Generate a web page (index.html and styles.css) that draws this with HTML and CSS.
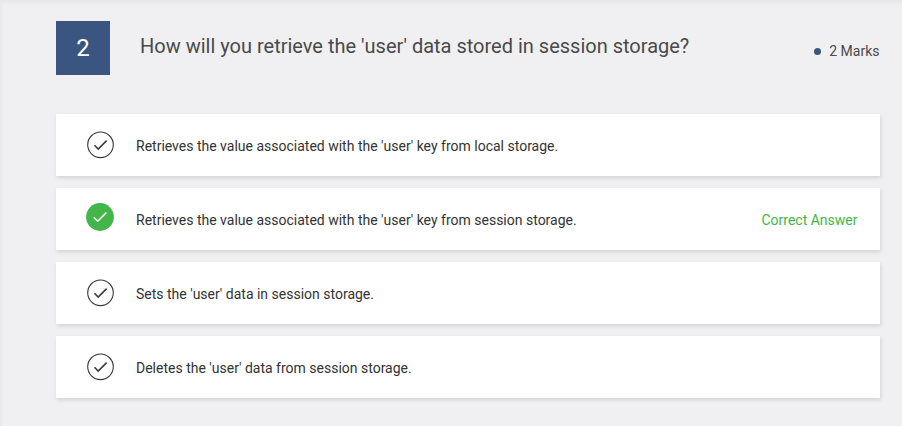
FILE: index.html
```html
<!DOCTYPE html>
<html lang="en">
<head>
<meta charset="utf-8">
<title>Question 2</title>
<link rel="stylesheet" href="styles.css">
</head>
<body>
<main class="question">
  <header class="question-header">
    <div class="number">2</div>
    <h1 class="title">How will you retrieve the 'user' data stored in session storage?</h1>
    <div class="marks">2 Marks</div>
  </header>
  <ul class="options">
    <li class="option">
      <svg class="icon" viewBox="0 0 28 28"><circle cx="14.5" cy="13.8" r="12.8"/><path d="M8.5 14.2l3.7 3.8 8.4-8.4"/></svg>
      <span class="text">Retrieves the value associated with the 'user' key from local storage.</span>
    </li>
    <li class="option correct">
      <svg class="icon" viewBox="0 0 28 28"><circle cx="14" cy="14" r="13.9"/><path d="M7.7 14.2l4 4 8.6-8.6"/></svg>
      <span class="text">Retrieves the value associated with the 'user' key from session storage.</span>
      <span class="answer">Correct Answer</span>
    </li>
    <li class="option">
      <svg class="icon" viewBox="0 0 28 28"><circle cx="14.5" cy="13.8" r="12.8"/><path d="M8.5 14.2l3.7 3.8 8.4-8.4"/></svg>
      <span class="text">Sets the 'user' data in session storage.</span>
    </li>
    <li class="option">
      <svg class="icon" viewBox="0 0 28 28"><circle cx="14.5" cy="13.8" r="12.8"/><path d="M8.5 14.2l3.7 3.8 8.4-8.4"/></svg>
      <span class="text">Deletes the 'user' data from session storage.</span>
    </li>
  </ul>
</main>
</body>
</html>
```
FILE: styles.css
```css
* { box-sizing: border-box; }
body {
  margin: 0;
  min-height: 426px;
  background: #f0f0f2;
  box-shadow: inset 2px 3px 4px -1px rgba(0, 0, 0, .05);
  font-family: Roboto, sans-serif;
  font-size: 14px;
  color: #333;
}
.question { padding: 21px 22px 28px 56px; }
.question-header { display: flex; align-items: flex-start; height: 93px; }
.number {
  width: 54px;
  height: 54px;
  background: #3b5581;
  color: #fff;
  font-size: 24px;
  line-height: 54px;
  text-align: center;
}
.title {
  flex: 1;
  margin: 10px 0 0 30px;
  font-size: 20px;
  font-weight: 400;
  line-height: 30px;
  color: #4a4a4a;
  white-space: nowrap;
}
.marks {
  display: flex;
  align-items: center;
  gap: 8px;
  margin: 20px .5px 0 0;
  line-height: 20px;
  color: #4a4a4a;
}
.marks::before {
  content: "";
  width: 7px;
  height: 7px;
  border-radius: 50%;
  background: #3b5581;
}
.options {
  display: grid;
  gap: 12px;
  margin: 0;
  padding: 0;
  list-style: none;
}
.option {
  display: flex;
  align-items: center;
  height: 62px;
  padding: 0 22.5px 0 30px;
  background: #fff;
  box-shadow: 1px 2px 4px rgba(0, 0, 0, .12);
}
.icon {
  width: 28px;
  height: 28px;
  margin-right: 22px;
  fill: none;
  stroke: #3a3a3a;
  stroke-width: 1.1;
}
.icon path { stroke-width: 1.6; }
.correct .icon { margin-bottom: 4px; }
.correct circle { fill: #43b649; stroke: none; }
.correct path { stroke: #fff; }
.text { flex: 1; padding-top: 2px; }
.answer { padding-top: 2px; color: #43b649; }
```
